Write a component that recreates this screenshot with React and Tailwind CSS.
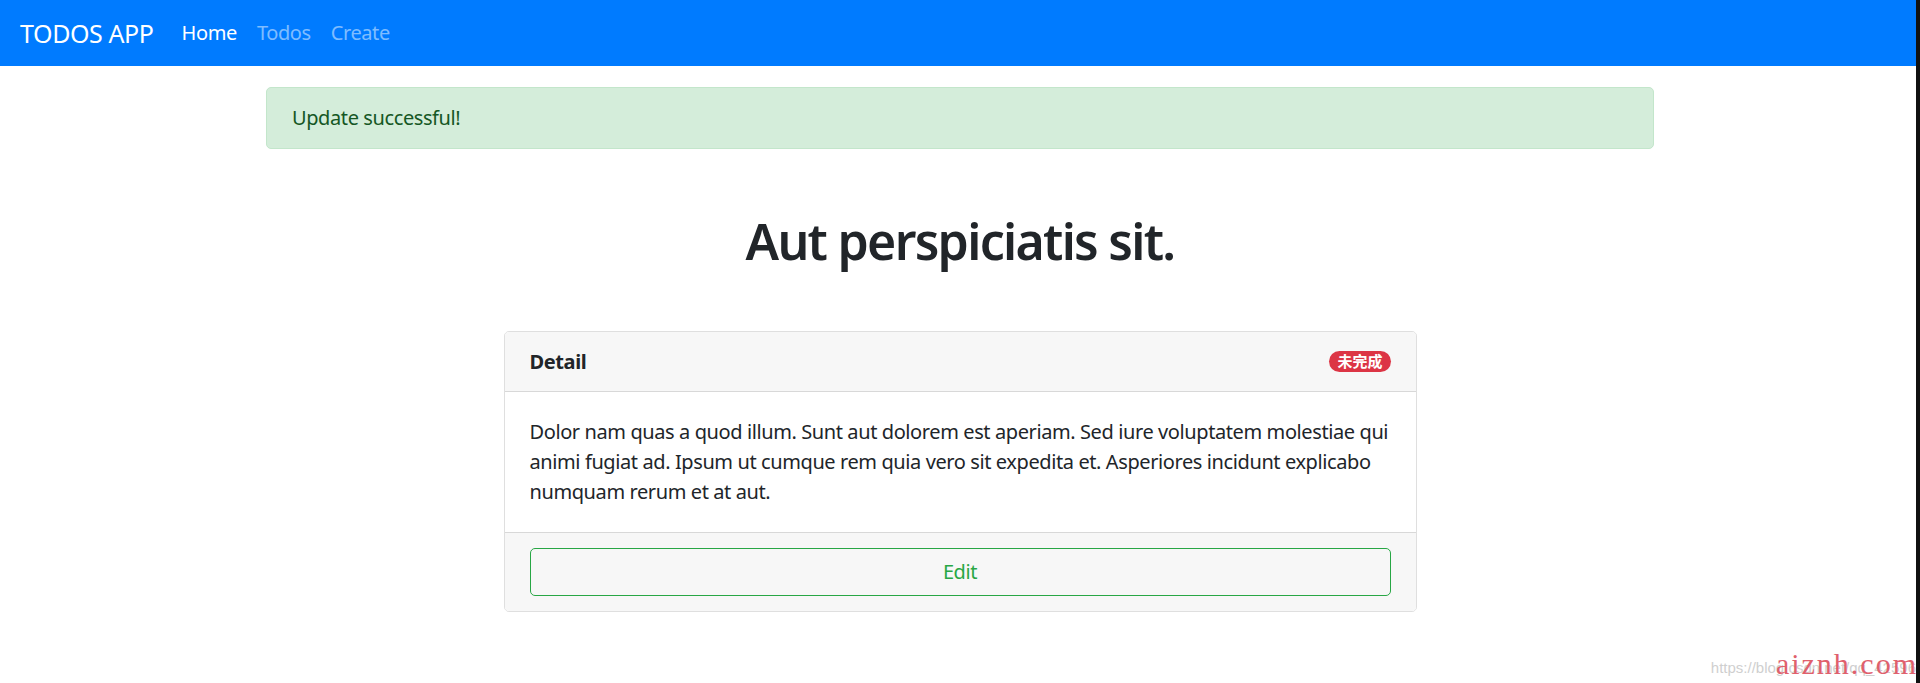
export default function App() {
  return (
    <div className="relative min-h-screen bg-white font-['Noto_Sans','Noto_Sans_CJK_SC',sans-serif] tracking-[-0.4px] text-[#212529]">
      <nav className="flex h-[66px] items-center bg-[#007bff] px-[20px]">
        <span className="mr-[18px] text-[25px] leading-[37px] text-white">TODOS APP</span>
        <a className="px-[10px] text-[20px] leading-[30px] text-white">Home</a>
        <a className="px-[10px] text-[20px] leading-[30px] text-white/50">Todos</a>
        <a className="px-[10px] text-[20px] leading-[30px] text-white/50">Create</a>
      </nav>

      <div className="mx-auto w-[1388px]">
        <div className="mt-[21px] rounded-[5px] border border-[#c3e6cb] bg-[#d4edda] px-[25px] py-[15px] text-[20px] leading-[30px] text-[#155724]">
          Update successful!
        </div>

        <h1 className="mt-[62px] text-center text-[50px] font-semibold leading-[60px] tracking-[-1.7px] text-[#212529]">
          Aut perspiciatis sit.
        </h1>

        <div className="mx-auto mt-[60px] w-[913px] overflow-hidden rounded-[5px] border border-black/[.125]">
          <div className="flex h-[60px] items-center justify-between border-b border-black/[.125] bg-[#f7f7f7] px-[25px]">
            <span className="text-[20px] font-bold leading-[30px]">Detail</span>
            <span className="flex h-[21px] items-center rounded-full bg-[#dc3545] px-[8px] text-[15px] font-bold leading-none tracking-normal text-white">
              未完成
            </span>
          </div>
          <div className="p-[25px] text-[20px] leading-[30px]">
            Dolor nam quas a quod illum. Sunt aut dolorem est aperiam. Sed iure voluptatem molestiae qui animi fugiat ad. Ipsum ut cumque rem quia vero sit expedita et. Asperiores incidunt explicabo numquam rerum et at aut.
          </div>
          <div className="border-t border-black/[.125] bg-[#f7f7f7] px-[25px] py-[15px]">
            <button className="h-[48px] w-full rounded-[5px] border border-[#28a745] text-[20px] leading-[30px] text-[#28a745]">
              Edit
            </button>
          </div>
        </div>
      </div>

      <div className="absolute right-0 top-0 h-full w-[4px] bg-[#111]" />
      <div className="absolute bottom-[8px] right-[4px] flex items-end tracking-normal">
        <span className="font-['Liberation_Sans',sans-serif] text-[15px] leading-none text-[#cfcfcf]">https://blog.csdn.net/qq_42596</span>
      </div>
      <span className="absolute bottom-[4px] right-[2px] font-['Liberation_Serif',serif] text-[30px] leading-none tracking-[2px] text-[#e0606c]">aiznh.com</span>
    </div>
  );
}
